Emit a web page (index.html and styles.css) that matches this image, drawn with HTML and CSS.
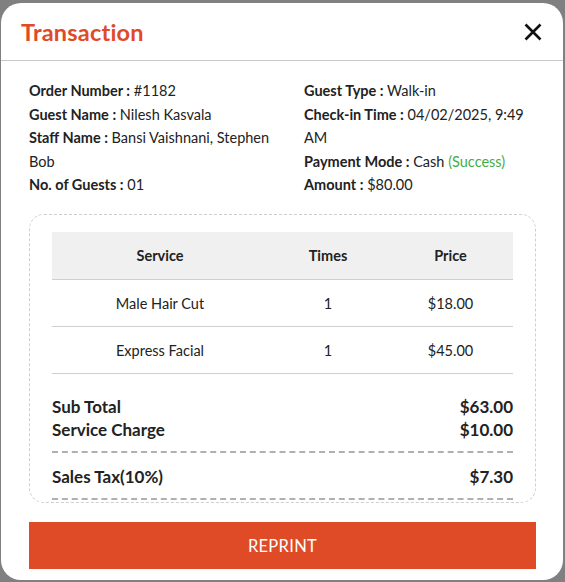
FILE: index.html
```html
<!DOCTYPE html>
<html lang="en">
<head>
  <meta charset="UTF-8" />
  <meta name="viewport" content="width=device-width, initial-scale=1.0" />
  <title>Transaction</title>
  <link rel="stylesheet" href="styles.css">
</head>
<body>
  <div class="modal">
    <div class="modal-header">
      <h1>Transaction</h1>
      <button class="close" aria-label="Close">
        <svg width="18" height="18" viewBox="0 0 18 18"><path d="M1.5 1.5 L16.5 16.5 M16.5 1.5 L1.5 16.5" stroke="#111" stroke-width="2.6" fill="none"/></svg>
      </button>
    </div>

    <div class="modal-body">
      <div class="info">
        <div class="info-col left">
          <p><b>Order Number :</b> #1182</p>
          <p><b>Guest Name :</b> Nilesh Kasvala</p>
          <p><b>Staff Name :</b> Bansi Vaishnani, Stephen Bob</p>
          <p><b>No. of Guests :</b> 01</p>
        </div>
        <div class="info-col right">
          <p><b>Guest Type :</b> Walk-in</p>
          <p><b>Check-in Time :</b> 04/02/2025, 9:49 AM</p>
          <p><b>Payment Mode :</b> Cash <span class="success">(Success)</span></p>
          <p><b>Amount :</b> $80.00</p>
        </div>
      </div>

      <div class="receipt">
        <table>
          <thead>
            <tr><th class="c-service">Service</th><th class="c-times">Times</th><th class="c-price">Price</th></tr>
          </thead>
          <tbody>
            <tr><td>Male Hair Cut</td><td>1</td><td>$18.00</td></tr>
            <tr><td>Express Facial</td><td>1</td><td>$45.00</td></tr>
          </tbody>
        </table>

        <div class="totals">
          <div class="row"><span>Sub Total</span><span>$63.00</span></div>
          <div class="row"><span>Service Charge</span><span>$10.00</span></div>
        </div>
        <div class="totals tax">
          <div class="row"><span>Sales Tax(10%)</span><span>$7.30</span></div>
        </div>
      </div>

      <button class="reprint">REPRINT</button>
    </div>
  </div>
</body>
</html>
```

FILE: styles.css
```css
body { margin: 0; background: #808080; font-family: Lato, "Liberation Sans", sans-serif; color: #222; }
.modal { margin: 3px 2px 0 1px; height: 577px; background: #fff; border-radius: 20px; box-sizing: border-box; overflow: hidden; }
.modal-header { height: 57px; display: flex; align-items: center; justify-content: space-between; padding: 0 21px 0 20px; border-bottom: 1px solid #c8c8c8; }
.modal-header h1 { margin: 0; font-size: 23.5px; font-weight: 700; color: #e04a27; letter-spacing: 0.2px; }
.close { background: none; border: none; padding: 0; width: 18px; height: 18px; cursor: pointer; }
.modal-body { padding: 18px 27px 12px 28px; }
.info { display: grid; grid-template-columns: 275px 1fr; }
.info-col p { margin: 0; font-size: 14.5px; line-height: 23.5px; }
.info-col.left { padding-right: 20px; }
.info-col.right { padding-right: 8px; }
.info-col b { font-weight: 700; }
.success { color: #3fae49; }
.receipt { margin-top: 17px; border: 1px dashed #cfcfcf; border-radius: 15px; padding: 17px 22px 2px; }
table { width: 100%; border-collapse: collapse; font-size: 14.5px; }
th, td { padding: 0; border-bottom: 1px solid #cfcfcf; box-sizing: border-box; }
th { height: 48px; background: #f0f0f0; font-weight: 700; }
td { height: 47px; text-align: center; }
.c-service { width: 216px; }
.c-times { width: 120px; }
.totals { border-bottom: 2px dashed #b0b0b0; padding: 21px 0 10px; }
.totals.tax { padding: 12px 0 10px; }
.row { display: flex; justify-content: space-between; font-size: 17px; font-weight: 700; line-height: 23px; }
.reprint { display: block; width: 100%; margin-top: 19px; height: 47px; background: #e04b27; color: #fff; border: none; font-family: inherit; font-size: 16.5px; letter-spacing: 0.3px; cursor: pointer; }
```
